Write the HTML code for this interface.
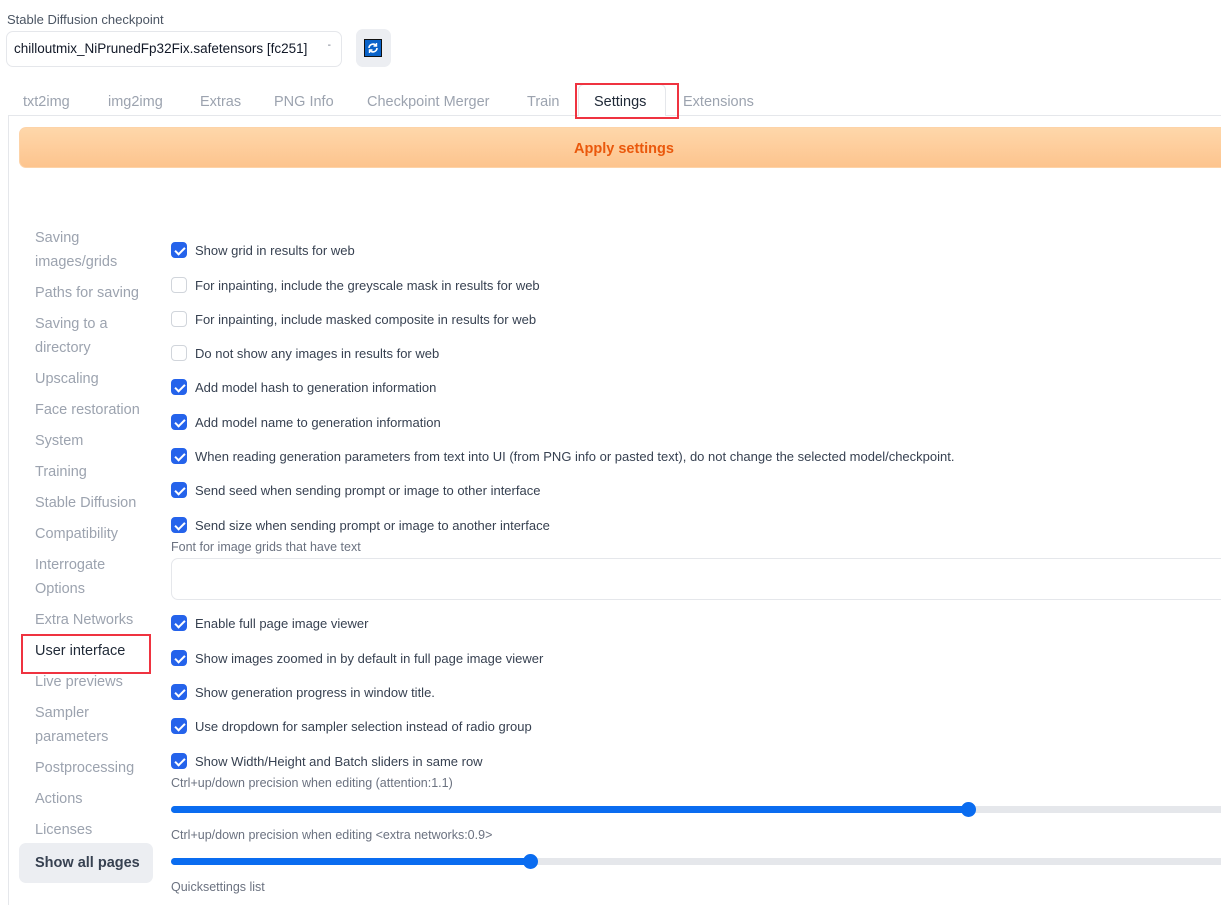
<!DOCTYPE html>
<html><head><meta charset="utf-8"><style>
*{box-sizing:border-box;margin:0;padding:0}
body{width:1221px;height:896px;overflow:hidden;background:#fff;font-family:"Liberation Sans",sans-serif;position:relative;color:#374151}
.a{position:absolute;white-space:nowrap}
.tab{position:absolute;top:94px;font-size:14.5px;color:#9ca3af}
.side{position:absolute;left:35px;font-size:14.5px;color:#9ca3af;line-height:24px;margin-top:1px}
.cb{position:absolute;left:171px;width:16px;height:16px;border-radius:4px;border:1px solid #d1d5db;background:#fff}
.cb.on{background:#2563eb;border-color:#2563eb}
.cb.on::after{content:"";position:absolute;left:5px;top:2px;width:4px;height:8px;border:solid #fff;border-width:0 2px 2px 0;transform:rotate(45deg)}
.lb{position:absolute;left:195px;font-size:13px;color:#374151;margin-top:1px}
.lab{position:absolute;left:171px;font-size:12.5px;color:#6b7280;margin-top:1px}
</style></head><body>
<div class="a" style="left:7px;top:12px;font-size:13px;color:#4b5563">Stable Diffusion checkpoint</div>
<div class="a" style="left:6px;top:31px;width:336px;height:36px;border:1px solid #e5e7eb;border-radius:7px;font-size:13.5px;color:#111827;padding:9px 0 0 7px">chilloutmix_NiPrunedFp32Fix.safetensors [fc251]<span style="position:absolute;right:10px;top:8px;color:#6b7280;font-size:10px">-</span></div>
<div class="a" style="left:356px;top:29px;width:35px;height:38px;background:#eceef2;border-radius:7px"><div style="position:absolute;left:8px;top:10px;width:18px;height:18px;background:#0a63c9;border:1px solid #111"><svg width="16" height="16" viewBox="0 0 16 16"><path d="M4 8a4 4 0 0 1 7-2.5M12 8a4 4 0 0 1-7 2.5" stroke="#fff" stroke-width="1.6" fill="none"/><path d="M11.5 3v3h-3M4.5 13v-3h3" stroke="#fff" stroke-width="1.4" fill="none"/></svg></div></div>
<div class="tab" style="left:23px">txt2img</div>
<div class="tab" style="left:108px">img2img</div>
<div class="tab" style="left:200px">Extras</div>
<div class="tab" style="left:274px">PNG Info</div>
<div class="tab" style="left:367px">Checkpoint Merger</div>
<div class="tab" style="left:527px">Train</div>
<div class="tab" style="left:683px">Extensions</div>
<div class="a" style="left:8px;top:115px;width:1213px;height:790px;border-left:1px solid #e5e7eb;border-top:1px solid #e5e7eb"></div>
<div class="a" style="left:578px;top:84px;width:88px;height:32px;background:#fff;border:1px solid #e5e7eb;border-bottom:none;border-radius:6px 6px 0 0"></div>
<div class="a" style="left:575px;top:83px;width:104px;height:36px;border:2px solid #ef3340"></div>
<div class="tab" style="left:594px;color:#1f2937">Settings</div>
<div class="a" style="left:19px;top:127px;width:1210px;height:41px;border-radius:7px;background:linear-gradient(#fed7aa,#fdc48e);border:1px solid #fdd3a8;text-align:center;padding-top:13px;font-size:14.5px;font-weight:bold;color:#ea580c">Apply settings</div>
<div class="side" style="top:225px">Saving<br>images/grids</div>
<div class="side" style="top:280px">Paths for saving</div>
<div class="side" style="top:311px">Saving to a<br>directory</div>
<div class="side" style="top:366px">Upscaling</div>
<div class="side" style="top:397px">Face restoration</div>
<div class="side" style="top:428px">System</div>
<div class="side" style="top:459px">Training</div>
<div class="side" style="top:490px">Stable Diffusion</div>
<div class="side" style="top:521px">Compatibility</div>
<div class="side" style="top:552px">Interrogate<br>Options</div>
<div class="side" style="top:607px">Extra Networks</div>
<div class="side" style="top:638px;color:#1f2937">User interface</div>
<div class="a" style="left:21px;top:634px;width:130px;height:40px;border:2px solid #ef3340"></div>
<div class="side" style="top:669px">Live previews</div>
<div class="side" style="top:700px">Sampler<br>parameters</div>
<div class="side" style="top:755px">Postprocessing</div>
<div class="side" style="top:786px">Actions</div>
<div class="side" style="top:817px">Licenses</div>
<div class="a" style="left:19px;top:843px;width:134px;height:40px;background:#eceef2;border-radius:7px;font-size:14.5px;font-weight:bold;color:#374151;padding:12px 0 0 16px">Show all pages</div>

<div class="cb on" style="top:242px"></div><div class="lb" style="top:242px">Show grid in results for web</div>
<div class="cb" style="top:277px"></div><div class="lb" style="top:277px">For inpainting, include the greyscale mask in results for web</div>
<div class="cb" style="top:311px"></div><div class="lb" style="top:311px">For inpainting, include masked composite in results for web</div>
<div class="cb" style="top:345px"></div><div class="lb" style="top:345px">Do not show any images in results for web</div>
<div class="cb on" style="top:379px"></div><div class="lb" style="top:379px">Add model hash to generation information</div>
<div class="cb on" style="top:414px"></div><div class="lb" style="top:414px">Add model name to generation information</div>
<div class="cb on" style="top:448px"></div><div class="lb" style="top:448px">When reading generation parameters from text into UI (from PNG info or pasted text), do not change the selected model/checkpoint.</div>
<div class="cb on" style="top:482px"></div><div class="lb" style="top:482px">Send seed when sending prompt or image to other interface</div>
<div class="cb on" style="top:517px"></div><div class="lb" style="top:517px">Send size when sending prompt or image to another interface</div>
<div class="lab" style="top:539px">Font for image grids that have text</div>
<div class="a" style="left:171px;top:558px;width:1060px;height:42px;border:1px solid #e5e7eb;border-radius:7px"></div>
<div class="cb on" style="top:615px"></div><div class="lb" style="top:615px">Enable full page image viewer</div>
<div class="cb on" style="top:650px"></div><div class="lb" style="top:650px">Show images zoomed in by default in full page image viewer</div>
<div class="cb on" style="top:684px"></div><div class="lb" style="top:684px">Show generation progress in window title.</div>
<div class="cb on" style="top:718px"></div><div class="lb" style="top:718px">Use dropdown for sampler selection instead of radio group</div>
<div class="cb on" style="top:753px"></div><div class="lb" style="top:753px">Show Width/Height and Batch sliders in same row</div>
<div class="lab" style="top:775px">Ctrl+up/down precision when editing (attention:1.1)</div>
<div class="a" style="left:171px;top:806px;width:1060px;height:7px;background:#e5e7eb;border-radius:4px"></div>
<div class="a" style="left:171px;top:806px;width:797px;height:7px;background:#0a6cf0;border-radius:4px"></div>
<div class="a" style="left:961px;top:802px;width:15px;height:15px;background:#0a6cf0;border-radius:50%"></div>
<div class="lab" style="top:827px">Ctrl+up/down precision when editing &lt;extra networks:0.9&gt;</div>
<div class="a" style="left:171px;top:858px;width:1060px;height:7px;background:#e5e7eb;border-radius:4px"></div>
<div class="a" style="left:171px;top:858px;width:360px;height:7px;background:#0a6cf0;border-radius:4px"></div>
<div class="a" style="left:523px;top:854px;width:15px;height:15px;background:#0a6cf0;border-radius:50%"></div>
<div class="lab" style="top:879px">Quicksettings list</div>
</body></html>
